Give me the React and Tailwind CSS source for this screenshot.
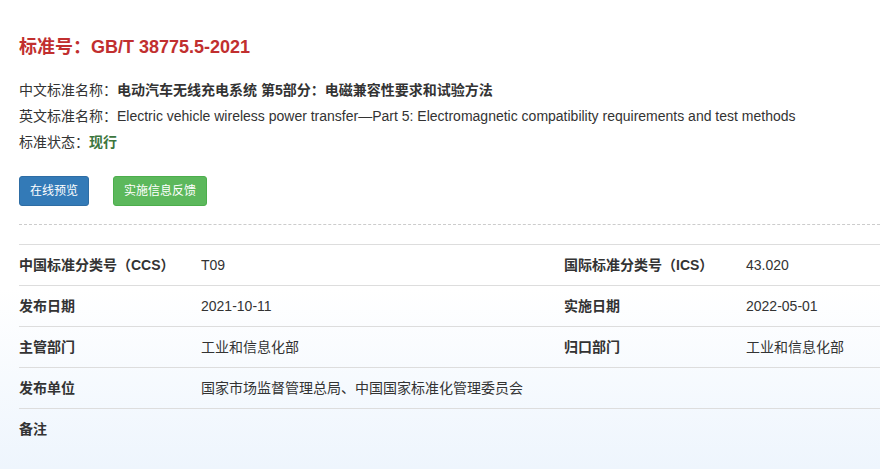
const rows = [
  [
    ['中国标准分类号（CCS）', 'T09'],
    ['国际标准分类号（ICS）', '43.020'],
  ],
  [
    ['发布日期', '2021-10-11'],
    ['实施日期', '2022-05-01'],
  ],
  [
    ['主管部门', '工业和信息化部'],
    ['归口部门', '工业和信息化部'],
  ],
]

const App = () => {
  return (
    <div
      className="w-full h-[469px] overflow-hidden bg-white flex flex-col text-[#333]"
      style={{ fontFamily: '"Liberation Sans", Arial, "Noto Sans CJK SC", sans-serif' }}
    >
      <div className="pl-[19px] pt-[35px]">
        <h1 className="text-[18px] leading-[24px] font-bold text-[#c12f2f]">标准号：GB/T 38775.5-2021</h1>

        <div className="mt-[18px] text-[14px] leading-[26px]">
          <p>
            中文标准名称：<span className="font-bold">电动汽车无线充电系统 第5部分：电磁兼容性要求和试验方法</span>
          </p>
          <p className="whitespace-nowrap">
            英文标准名称：Electric vehicle wireless power transfer—Part 5: Electromagnetic compatibility requirements and test methods
          </p>
          <p>
            标准状态：<span className="font-bold text-[#3c763d]">现行</span>
          </p>
        </div>

        <div className="mt-[21px] flex gap-[24px]">
          <button className="px-[10px] py-[5px] text-[12px] leading-[18px] text-white bg-[#337ab7] border border-[#2e6da4] rounded-[3px]">
            在线预览
          </button>
          <button className="px-[10px] py-[5px] text-[12px] leading-[18px] text-white bg-[#5cb85c] border border-[#4cae4c] rounded-[3px]">
            实施信息反馈
          </button>
        </div>

        <div className="mt-[18px] border-t border-dashed border-[#ccc]" />
      </div>

      <div className="mt-[19px] flex-1 pl-[19px] bg-gradient-to-b from-white via-white via-20% to-[#eef5fd]">
        <div className="w-[1090px] text-[14px]">
          {rows.map((row, i) => (
            <div key={i} className="grid grid-cols-[182px_363px_182px_363px] h-[41px] items-center border-t border-[#ddd]">
              {row.map(([label, value]) => (
                <div key={label} className="contents">
                  <div className="font-bold">{label}</div>
                  <div>{value}</div>
                </div>
              ))}
            </div>
          ))}
          <div className="grid grid-cols-[182px_908px] h-[41px] items-center border-t border-[#ddd]">
            <div className="font-bold">发布单位</div>
            <div>国家市场监督管理总局、中国国家标准化管理委员会</div>
          </div>
          <div className="grid grid-cols-[182px_908px] h-[41px] items-center border-t border-[#ddd]">
            <div className="font-bold">备注</div>
            <div></div>
          </div>
        </div>
      </div>
    </div>
  )
}

export default App
